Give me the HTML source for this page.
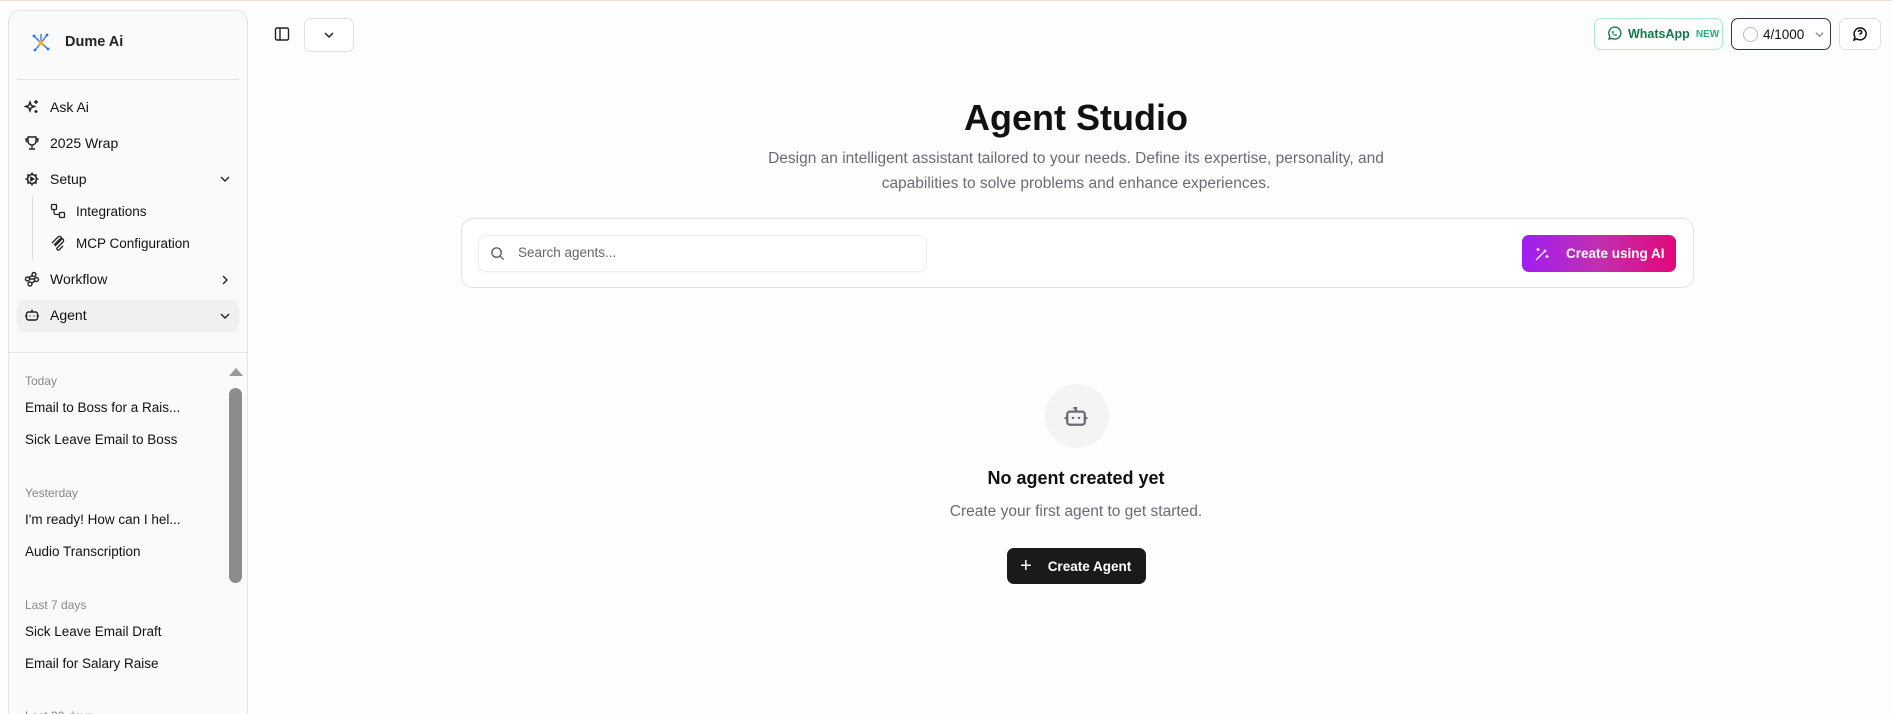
<!DOCTYPE html>
<html style="width:1892px;height:714px;overflow:hidden"><head><meta charset="utf-8"><style>
*{box-sizing:border-box;margin:0;padding:0}
body{width:1892px;height:714px;overflow:hidden;background:#fdfdfd;font-family:"Liberation Sans",sans-serif;color:#111;position:relative}
.abs{position:absolute}
.sb{left:8px;top:10px;width:240px;height:704px;background:#fafafa;border:1px solid #e4e4e4;border-bottom:none;border-radius:12px 12px 0 0}
.item{position:absolute;left:24px;font-size:14px;color:#111;display:flex;align-items:center;gap:10px}
.item svg{width:16px;height:16px}
.hist{position:absolute;left:25px;font-size:13.5px;color:#111}
.lbl{position:absolute;left:25px;font-size:12px;color:#888}
.chev{position:absolute;left:219px}
</style></head><body>
<div class="abs" style="left:0;top:0;width:1892px;height:1px;background:#f5dccb"></div>
<div class="abs sb"></div>
<svg class="abs" style="left:30px;top:32px" width="22" height="22" viewBox="0 0 22 22"><g stroke="#2a6ff0" stroke-width="1.3"><line x1="11" y1="11" x2="4" y2="4"/><line x1="11" y1="11" x2="17" y2="3"/><line x1="11" y1="11" x2="18" y2="17"/><line x1="11" y1="11" x2="5" y2="18"/><line x1="11" y1="11" x2="11" y2="2"/></g><circle cx="11" cy="11" r="2.5" fill="#f5b800"/><circle cx="4" cy="4" r="1.4" fill="#2a6ff0"/><circle cx="17" cy="3" r="1.4" fill="#2a6ff0"/><circle cx="18" cy="17" r="1.4" fill="#2a6ff0"/><circle cx="5" cy="18" r="1.4" fill="#2a6ff0"/></svg>
<div class="abs" style="left:65px;top:34px;font-size:14.5px;font-weight:bold;color:#222">Dume Ai</div>
<div class="abs" style="left:17px;top:79px;width:222px;height:1px;background:#e2e2e2"></div>
<div class="abs" style="left:17px;top:300px;width:222px;height:32px;background:#f0f0f0;border-radius:8px"></div>
<div class="abs" style="left:32px;top:196px;width:1px;height:64px;background:#ddd"></div>
<div class="item" style="top:99px"><svg viewBox="0 0 16 16" fill="none" stroke="#222" stroke-width="1.4"><path d="M6 3l1.2 3.3L10.5 7.5 7.2 8.7 6 12 4.8 8.7 1.5 7.5 4.8 6.3z"/><path d="M12 1v4M10 3h4M12 11v3M10.5 12.5h3"/></svg>Ask Ai</div>
<div class="item" style="top:135px"><svg viewBox="0 0 16 16" fill="none" stroke="#222" stroke-width="1.4"><path d="M4 2h8v4a4 4 0 0 1-8 0z M4 4H2v1a2 2 0 0 0 2 2M12 4h2v1a2 2 0 0 1-2 2M8 10v3M5 14h6"/></svg>2025 Wrap</div>
<div class="item" style="top:171px"><svg viewBox="0 0 16 16" fill="none" stroke="#222" stroke-width="1.6"><circle cx="8" cy="8" r="4.5"/><path d="M8 1.5v2M8 12.5v2M1.5 8h2M12.5 8h2M3.4 3.4l1.4 1.4M11.2 11.2l1.4 1.4M3.4 12.6l1.4-1.4M11.2 4.8l1.4-1.4"/><path d="M7 6.5l2.5 1.5L7 9.5z" fill="#222"/></svg>Setup</div>
<svg class="abs chev" style="top:173px" width="12" height="12" viewBox="0 0 12 12"><path d="M2 4l4 4 4-4" fill="none" stroke="#222" stroke-width="1.4"/></svg>
<div class="item" style="top:203px;left:50px;font-size:13.5px"><svg viewBox="0 0 16 16" fill="none" stroke="#222" stroke-width="1.3"><rect x="1.5" y="1.5" width="5" height="5" rx="1"/><rect x="9.5" y="9.5" width="5" height="5" rx="1"/><path d="M4 6.5v3a2 2 0 0 0 2 2h3.5"/></svg>Integrations</div>
<div class="item" style="top:235px;left:50px;font-size:13.5px"><svg viewBox="0 0 16 16" fill="none" stroke="#222" stroke-width="1.3"><path d="M2 8l6-6a2 2 0 0 1 3 3L5 11M4 10l6-6a2 2 0 0 1 3 3l-6 6a1.5 1.5 0 0 0 2 2l4-4"/></svg>MCP Configuration</div>
<div class="item" style="top:271px"><svg viewBox="0 0 16 16" fill="none" stroke="#222" stroke-width="1.4"><circle cx="3.5" cy="8" r="2"/><circle cx="10" cy="3.5" r="2"/><circle cx="12.5" cy="8.5" r="2"/><circle cx="6" cy="13" r="2"/><path d="M5 6.5L8.3 4.5M5.5 8h5M7.8 12l3.3-2"/></svg>Workflow</div>
<svg class="abs chev" style="top:274px" width="12" height="12" viewBox="0 0 12 12"><path d="M4 2l4 4-4 4" fill="none" stroke="#222" stroke-width="1.4"/></svg>
<div class="item" style="top:307px;font-weight:500"><svg viewBox="0 0 16 16" fill="none" stroke="#222" stroke-width="1.4"><rect x="2.5" y="5" width="11" height="8" rx="2"/><path d="M8 5V2.5M1 9h1.5M13.5 9H15M6 8.5v1M10 8.5v1"/></svg>Agent</div>
<svg class="abs chev" style="top:310px" width="12" height="12" viewBox="0 0 12 12"><path d="M2 4l4 4 4-4" fill="none" stroke="#222" stroke-width="1.4"/></svg>
<div class="abs" style="left:9px;top:352px;width:238px;height:1px;background:#e2e2e2"></div>
<div class="abs" style="left:229px;top:368px;width:0;height:0;border-left:7px solid transparent;border-right:7px solid transparent;border-bottom:8px solid #999"></div>
<div class="abs" style="left:229px;top:388px;width:13px;height:195px;background:#8c8c8c;border-radius:7px"></div>
<div class="lbl" style="top:374px">Today</div>
<div class="hist" style="top:400px">Email to Boss for a Rais...</div>
<div class="hist" style="top:432px">Sick Leave Email to Boss</div>
<div class="lbl" style="top:486px">Yesterday</div>
<div class="hist" style="top:512px">I'm ready! How can I hel...</div>
<div class="hist" style="top:544px">Audio Transcription</div>
<div class="lbl" style="top:598px">Last 7 days</div>
<div class="hist" style="top:624px">Sick Leave Email Draft</div>
<div class="hist" style="top:656px">Email for Salary Raise</div>
<div class="lbl" style="top:709px">Last 30 days</div>

<svg class="abs" style="left:274px;top:26px" width="16" height="16" viewBox="0 0 16 16" fill="none" stroke="#222" stroke-width="1.4"><rect x="1.5" y="2" width="13" height="12" rx="1.5"/><path d="M6 2v12"/></svg>
<div class="abs" style="left:304px;top:18px;width:50px;height:34px;border:1px solid #e0e0e0;border-radius:7px;background:#fff"></div>
<svg class="abs" style="left:323px;top:29px" width="12" height="12" viewBox="0 0 12 12"><path d="M2 4l4 4 4-4" fill="none" stroke="#222" stroke-width="1.5"/></svg>

<div class="abs" style="left:1594px;top:18px;width:129px;height:32px;border:1px solid #a7ecc9;border-radius:7px;background:#fff;display:flex;align-items:center;padding-left:11px;gap:6px;font-size:12.5px;font-weight:bold;color:#137a4c"><svg width="16" height="16" viewBox="0 0 16 16" fill="none" stroke="#137a4c" stroke-width="1.4"><path d="M3 13l.8-2.6A6 6 0 1 1 6 12.4z"/><path d="M6 5.5c0 2.5 2 4.5 4.5 4.5l.7-1.2-1.5-.7-.7.7c-.8-.3-1.5-1-1.8-1.8l.7-.7-.7-1.5z" fill="#137a4c" stroke="none"/></svg>WhatsApp <span style="font-size:10px;color:#22b07a">NEW</span></div>
<div class="abs" style="left:1731px;top:18px;width:100px;height:32px;border:1.5px solid #2d3748;border-radius:7px;background:#fff;display:flex;align-items:center;padding-left:11px;gap:5px;font-size:13.5px;font-weight:500"><span style="width:15px;height:15px;border:1.5px solid #bbb;border-radius:50%"></span>4/1000<svg style="margin-left:5px" width="11" height="11" viewBox="0 0 12 12"><path d="M2 4l4 4 4-4" fill="none" stroke="#888" stroke-width="1.4"/></svg></div>
<div class="abs" style="left:1839px;top:18px;width:42px;height:32px;border:1px solid #e0e0e0;border-radius:7px;background:#fff"></div>
<svg class="abs" style="left:1852px;top:26px" width="16" height="16" viewBox="0 0 16 16" fill="none" stroke="#111" stroke-width="1.5"><path d="M2 14l1-3A6 6 0 1 1 5 13z"/><path d="M6.5 6a1.6 1.6 0 1 1 2.2 1.5c-.5.2-.7.6-.7 1v.3M8 10.7v.3"/></svg>

<div class="abs" style="left:0;width:1892px;text-align:center;padding-left:260px;top:97px;font-size:36px;font-weight:bold;color:#111">Agent Studio</div>
<div class="abs" style="left:0;width:1892px;padding-left:260px;text-align:center;top:146px;font-size:15.5px;line-height:25px;color:#6b6b75">Design an intelligent assistant tailored to your needs. Define its expertise, personality, and<br>capabilities to solve problems and enhance experiences.</div>

<div class="abs" style="left:461px;top:218px;width:1233px;height:70px;border:1px solid #e2e2e2;border-radius:12px;background:#fff"></div>
<div class="abs" style="left:478px;top:235px;width:449px;height:37px;border:1px solid #eee;border-radius:8px;background:#fff;box-shadow:0 1px 2px rgba(0,0,0,.04)"></div>
<svg class="abs" style="left:490px;top:246px" width="15" height="15" viewBox="0 0 16 16" fill="none" stroke="#555" stroke-width="1.4"><circle cx="7" cy="7" r="5"/><path d="M11 11l3.5 3.5"/></svg>
<div class="abs" style="left:518px;top:245px;font-size:13.5px;color:#666">Search agents...</div>
<div class="abs" style="left:1522px;top:235px;width:154px;height:37px;border-radius:7px;background:linear-gradient(90deg,#a11ef2,#c030b0,#e2067a);color:#fff;font-size:13.5px;font-weight:bold;display:flex;align-items:center;padding-left:12px;gap:16px"><svg width="16" height="16" viewBox="0 0 16 16" fill="none" stroke="#fff" stroke-width="1.3"><path d="M2 14L12 4M10 4l2 2M4 2v3M2.5 3.5h3M13 9v3M11.5 10.5h3"/></svg>Create using AI</div>

<div class="abs" style="left:1045px;top:384px;width:64px;height:64px;border-radius:50%;background:#f4f4f5"></div>
<svg class="abs" style="left:1062px;top:402px" width="28" height="28" viewBox="0 0 16 16" fill="none" stroke="#6b6b75" stroke-width="1.3"><rect x="3" y="5.5" width="10" height="7.5" rx="1.5"/><path d="M8 5.5V3.5H6.5M1.5 9.2H3M13 9.2h1.5M6.3 8.5v1.2M9.7 8.5v1.2"/></svg>
<div class="abs" style="left:0;width:1892px;padding-left:260px;text-align:center;top:468px;font-size:18px;font-weight:bold;color:#111">No agent created yet</div>
<div class="abs" style="left:0;width:1892px;padding-left:260px;text-align:center;top:503px;font-size:15.5px;color:#6b6b75">Create your first agent to get started.</div>
<div class="abs" style="left:1007px;top:548px;width:139px;height:36px;border-radius:7px;background:#1a1a1a;color:#fff;font-size:13.5px;font-weight:bold;display:flex;align-items:center;padding-left:13px;gap:16px"><span style="font-size:20px;font-weight:normal;line-height:1">+</span>Create Agent</div>
</body></html>
